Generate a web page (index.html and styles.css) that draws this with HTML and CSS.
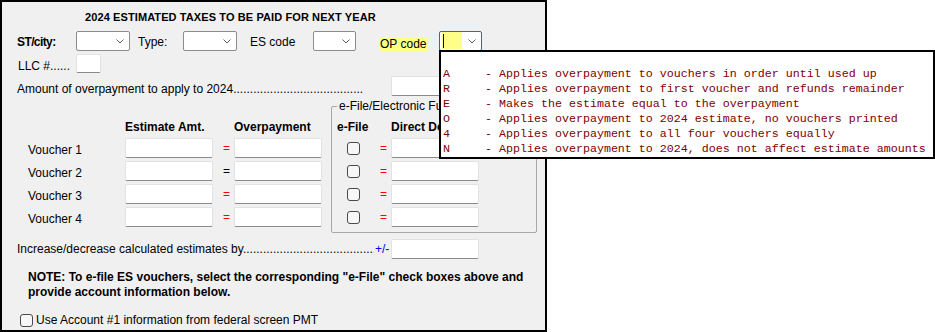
FILE: index.html
```html
<!DOCTYPE html>
<html>
<head>
<meta charset="utf-8">
<link rel="stylesheet" href="styles.css">
</head>
<body>
<div class="panel">
  <div class="title">2024 ESTIMATED TAXES TO BE PAID FOR NEXT YEAR</div>

  <div class="row row-codes">
    <span class="lbl bold w-st">ST/city:</span>
    <div class="sel w54"><svg class="chev" width="8" height="5" viewBox="0 0 8 5"><path d="M0.5 0.5 L4 4 L7.5 0.5" /></svg></div>
    <span class="lbl w-type">Type:</span>
    <div class="sel w54"><svg class="chev" width="8" height="5" viewBox="0 0 8 5"><path d="M0.5 0.5 L4 4 L7.5 0.5" /></svg></div>
    <span class="lbl w-es">ES code</span>
    <div class="sel w43"><svg class="chev" width="8" height="5" viewBox="0 0 8 5"><path d="M0.5 0.5 L4 4 L7.5 0.5" /></svg></div>
    <span class="lbl op">OP code</span>
    <div class="sel w43 focus"><span class="op-fill"><span class="caret"></span></span><svg class="chev" width="8" height="5" viewBox="0 0 8 5"><path d="M0.5 0.5 L4 4 L7.5 0.5" /></svg></div>
  </div>

  <div class="row row-llc">
    <span class="lbl w-llc">LLC #......</span>
    <div class="inp w25"></div>
  </div>

  <div class="row row-amt">
    <span class="lead w-amt">Amount of overpayment to apply to 2024.................................................</span>
    <div class="inp w88 amt-inp"></div>
  </div>

  <div class="vsec">
    <div class="vgrid">
      <span></span>
      <span class="hdr">Estimate Amt.</span>
      <span></span>
      <span class="hdr">Overpayment</span>

      <span class="vlbl">Voucher 1</span>
      <div class="inp"></div>
      <span class="eq red">=</span>
      <div class="inp"></div>

      <span class="vlbl">Voucher 2</span>
      <div class="inp"></div>
      <span class="eq">=</span>
      <div class="inp"></div>

      <span class="vlbl">Voucher 3</span>
      <div class="inp"></div>
      <span class="eq red">=</span>
      <div class="inp"></div>

      <span class="vlbl">Voucher 4</span>
      <div class="inp"></div>
      <span class="eq red">=</span>
      <div class="inp"></div>
    </div>

    <div class="gbox">
      <span class="legend">e-File/Electronic Funds Withdrawal</span>
      <span class="hdr hdr-ef">e-File</span>
      <span></span>
      <span class="hdr">Direct Deposit</span>

      <span class="cbcell"><span class="cb"></span></span>
      <span class="eq red">=</span>
      <div class="inp"></div>

      <span class="cbcell"><span class="cb"></span></span>
      <span class="eq red">=</span>
      <div class="inp"></div>

      <span class="cbcell"><span class="cb"></span></span>
      <span class="eq red">=</span>
      <div class="inp"></div>

      <span class="cbcell"><span class="cb"></span></span>
      <span class="eq red">=</span>
      <div class="inp"></div>
    </div>
  </div>

  <div class="row row-inc">
    <span class="lead w-inc">Increase/decrease calculated estimates by.................................................</span>
    <span class="pm">+/-</span>
    <div class="inp w88"></div>
  </div>

  <div class="note">NOTE: To e-file ES vouchers, select the corresponding "e-File" check boxes above and<br>provide account information below.</div>

  <div class="row row-acct">
    <span class="cb"></span>
    <span class="acct-txt">Use Account #1 information from federal screen PMT</span>
  </div>
</div>

<div class="popup">
  <div class="pline"> </div>
  <div class="pline">A     - Applies overpayment to vouchers in order until used up</div>
  <div class="pline">R     - Applies overpayment to first voucher and refunds remainder</div>
  <div class="pline">E     - Makes the estimate equal to the overpayment</div>
  <div class="pline">O     - Applies overpayment to 2024 estimate, no vouchers printed</div>
  <div class="pline">4     - Applies overpayment to all four vouchers equally</div>
  <div class="pline">N     - Applies overpayment to 2024, does not affect estimate amounts</div>
</div>
</body>
</html>
```

FILE: styles.css
```css
body {
  margin: 0;
  background: #ffffff;
  font-family: "Liberation Sans", Arial, sans-serif;
  font-size: 12px;
  color: #000;
}

.panel {
  width: 547px;
  height: 332px;
  box-sizing: border-box;
  border: 2px solid #000;
  background: #f0f0f0;
  padding: 8px 0 0 15px;
}

.title {
  margin-left: 68px;
  font-weight: bold;
  font-size: 11px;
  letter-spacing: 0.1px;
  line-height: 14px;
  white-space: nowrap;
}

.row {
  display: flex;
  align-items: center;
}

.bold { font-weight: bold; }

.lbl {
  align-self: flex-end;
  line-height: 14px;
  margin-bottom: 2px;
  white-space: nowrap;
}

.row-codes {
  margin-top: 7px;
  height: 20px;
}

.w-st { width: 59px; letter-spacing: -0.6px; }
.w-type { width: 45px; margin-left: 8px; }
.w-es { width: 63px; margin-left: 13px; }
.op {
  width: 48px;
  margin-left: 24px;
  margin-right: 11px;
  margin-bottom: 0;
  line-height: 13px;
  background: #ffff88;
}

.sel {
  height: 20px;
  box-sizing: border-box;
  border: 1px solid #8c8c8c;
  border-radius: 2px;
  background: #fff;
  display: flex;
  align-items: center;
  justify-content: flex-end;
  padding-right: 5px;
  position: relative;
}
.w54 { width: 54px; }
.w43 { width: 43px; }
.w25 { width: 25px; }
.w88 { width: 88px; }

.chev path {
  fill: none;
  stroke: #5f5f5f;
  stroke-width: 1;
}

.sel.focus {
  border-color: #0078d7;
  justify-content: space-between;
  padding-left: 2px;
}
.op-fill {
  width: 20px;
  height: 17px;
  background: #ffff88;
  display: flex;
  align-items: center;
  align-self: flex-start;
  padding-left: 1px;
  box-sizing: border-box;
}
.caret {
  width: 1px;
  height: 14px;
  background: #000060;
}

.inp {
  height: 20px;
  box-sizing: border-box;
  background: #fff;
  border: 1px solid #e2e2e2;
  border-bottom-color: #8a8a8a;
  border-radius: 2px;
}

.row-llc {
  margin-top: 3px;
  height: 19px;
}
.row-llc .inp { height: 19px; }
.w-llc {
  width: 58px;
  margin-left: 1px;
  margin-bottom: 0;
}

.row-amt {
  margin-top: 3px;
  height: 20px;
}
.lead {
  overflow: hidden;
  white-space: nowrap;
  line-height: 14px;
  align-self: flex-end;
}
.w-amt {
  width: 346px;
  margin-right: 28px;
}

.vsec {
  display: flex;
  align-items: flex-start;
  margin-top: 10px;
}

.vgrid {
  display: grid;
  grid-template-columns: 108px 88px 21px 88px;
  grid-template-rows: 16px;
  grid-auto-rows: 20px;
  row-gap: 3px;
  padding-top: 13px;
}

.hdr {
  font-weight: bold;
  line-height: 16px;
  white-space: nowrap;
}

.vlbl {
  padding-left: 11px;
  align-self: end;
  line-height: 16px;
}

.eq {
  text-align: right;
  padding-right: 4px;
  line-height: 20px;
}
.red { color: #ff0000; }

.gbox {
  position: relative;
  margin-left: 9px;
  border: 1px solid #a8a8a8;
  border-radius: 2px;
  padding: 12px 57px 5px 0;
  display: grid;
  grid-template-columns: 40px 19px 88px;
  grid-template-rows: 16px;
  grid-auto-rows: 20px;
  row-gap: 3px;
}

.legend {
  position: absolute;
  top: -8px;
  left: 5px;
  padding: 0 2px;
  line-height: 14px;
  background: #f0f0f0;
  white-space: nowrap;
}

.hdr-ef { padding-left: 5px; }

.cbcell {
  display: flex;
  align-items: center;
  padding-left: 15px;
}

.cb {
  width: 13px;
  height: 13px;
  box-sizing: border-box;
  border: 1px solid #4a4a4a;
  border-radius: 3px;
  background: #f7f7f7;
  flex: none;
}

.row-inc {
  margin-top: 6px;
  height: 20px;
}
.w-inc { width: 357px; align-self: center; }
.pm {
  width: 16px;
  margin-left: 1px;
  color: #0000ff;
}

.note {
  margin-top: 11px;
  padding-left: 11px;
  font-weight: bold;
  line-height: 15px;
  white-space: nowrap;
}

.row-acct {
  margin-top: 12px;
  height: 16px;
  padding-left: 3px;
}
.acct-txt {
  margin-left: 3px;
  line-height: 16px;
  white-space: nowrap;
}

.popup {
  position: absolute;
  left: 439px;
  top: 50px;
  width: 496px;
  height: 109px;
  box-sizing: border-box;
  border: 2px solid #000;
  background: #fff;
  padding-left: 2px;
  font-family: "Liberation Mono", "Courier New", monospace;
  font-size: 11.67px;
  color: #800000;
}
.pline {
  white-space: pre;
  line-height: 15px;
  height: 15px;
}
```
